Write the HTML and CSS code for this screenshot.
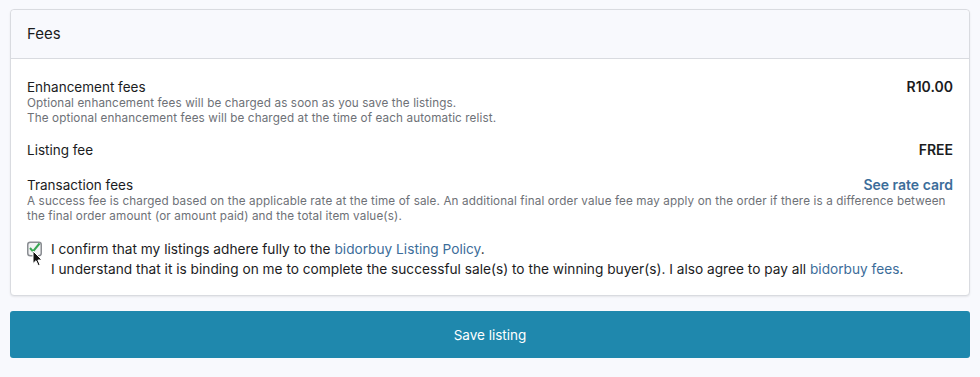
FILE: index.html
```html
<!DOCTYPE html>
<html lang="en">
<head>
    <meta charset="UTF-8">
    <meta name="viewport" content="width=device-width, initial-scale=1.0">
    <title>Fees</title>
    <link rel="stylesheet" href="styles.css">
</head>
<body>
    <div class="card">
        <div class="card-header">Fees</div>
        <div class="card-body">
            <div class="fee-row">
                <div class="fee-head">
                    <span class="fee-name">Enhancement fees</span>
                    <span class="fee-value">R10.00</span>
                </div>
                <div class="fee-note">Optional enhancement fees will be charged as soon as you save the listings.</div>
                <div class="fee-note">The optional enhancement fees will be charged at the time of each automatic relist.</div>
            </div>
            <div class="fee-row short">
                <div class="fee-head">
                    <span class="fee-name">Listing fee</span>
                    <span class="fee-value">FREE</span>
                </div>
            </div>
            <div class="fee-row">
                <div class="fee-head">
                    <span class="fee-name">Transaction fees</span>
                    <a class="fee-value link" href="#">See rate card</a>
                </div>
                <div class="fee-note">A success fee is charged based on the applicable rate at the time of sale. An additional final order value fee may apply on the order if there is a difference between the final order amount (or amount paid) and the total item value(s).</div>
            </div>
            <div class="confirm">
                <span class="check">
                    <svg width="15" height="16" viewBox="0 0 15 16">
                        <rect x="0.75" y="1.25" width="13.5" height="13.5" rx="2.5" fill="#f2f3f4" stroke="#8a8d92" stroke-width="1.5"/>
                        <path d="M3 7 L6 10.5 L12.5 2.5" fill="none" stroke="#38a653" stroke-width="2"/>
                    </svg>
                    <svg class="cursor" width="11" height="17" viewBox="0 0 11 17">
                        <path d="M1 1 L1 13.5 L4 10.7 L6.2 15.6 L8.1 14.8 L5.9 10 L10 10 Z" fill="#111" stroke="#fff" stroke-width="1"/>
                    </svg>
                </span>
                <div class="confirm-text">
                    <p>I confirm that my listings adhere fully to the <a href="#">bidorbuy Listing Policy</a>.</p>
                    <p>I understand that it is binding on me to complete the successful sale(s) to the winning buyer(s). I also agree to pay all <a href="#">bidorbuy fees</a>.</p>
                </div>
            </div>
        </div>
    </div>
    <button class="save-btn" type="button">Save listing</button>
</body>
</html>
```

FILE: styles.css
```css
body {
    margin: 0;
    padding: 9px 10px;
    background-color: #f8f9fd;
    font-family: Inter, "Noto Sans", sans-serif;
    color: #1b1c1e;
}

.card {
    background-color: #fff;
    border: 1px solid #d9dbe0;
    border-radius: 4px;
    box-shadow: 0 1px 2px rgba(0, 0, 0, 0.08);
}

.card-header {
    height: 48px;
    line-height: 48px;
    padding: 0 16px;
    font-size: 15px;
    background-color: #f8f9fd;
    border-bottom: 1px solid #d9dbe0;
    border-radius: 4px 4px 0 0;
}

.card-body {
    padding: 19px 16px 16px;
}

.fee-row {
    margin-bottom: 15px;
}

.fee-row.short {
    padding-bottom: 2px;
}

.fee-head {
    display: flex;
    justify-content: space-between;
    align-items: baseline;
    line-height: 17px;
}

.fee-name {
    font-size: 13.5px;
}

.fee-note {
    font-size: 11.7px;
    letter-spacing: 0.12px;
    line-height: 15px;
    color: #6e7177;
}

.fee-value {
    font-size: 14px;
    font-weight: 600;
    white-space: nowrap;
}

.fee-value.link {
    color: #3c6d9a;
    text-decoration: none;
}

.confirm {
    display: flex;
    gap: 9px;
}

.check {
    position: relative;
    margin-top: 2px;
    width: 15px;
    height: 16px;
}

.check .cursor {
    position: absolute;
    left: 5px;
    top: 9px;
}

.confirm-text p {
    margin: 0;
    font-size: 13.7px;
    line-height: 20px;
}

.confirm-text a {
    color: #3c6d9a;
    text-decoration: none;
}

.save-btn {
    display: block;
    width: 100%;
    height: 47px;
    margin-top: 15px;
    background-color: #1f88ad;
    color: #fff;
    border: none;
    border-radius: 3px;
    font-family: Inter, "Noto Sans", sans-serif;
    font-size: 13.5px;
    cursor: pointer;
}
```
